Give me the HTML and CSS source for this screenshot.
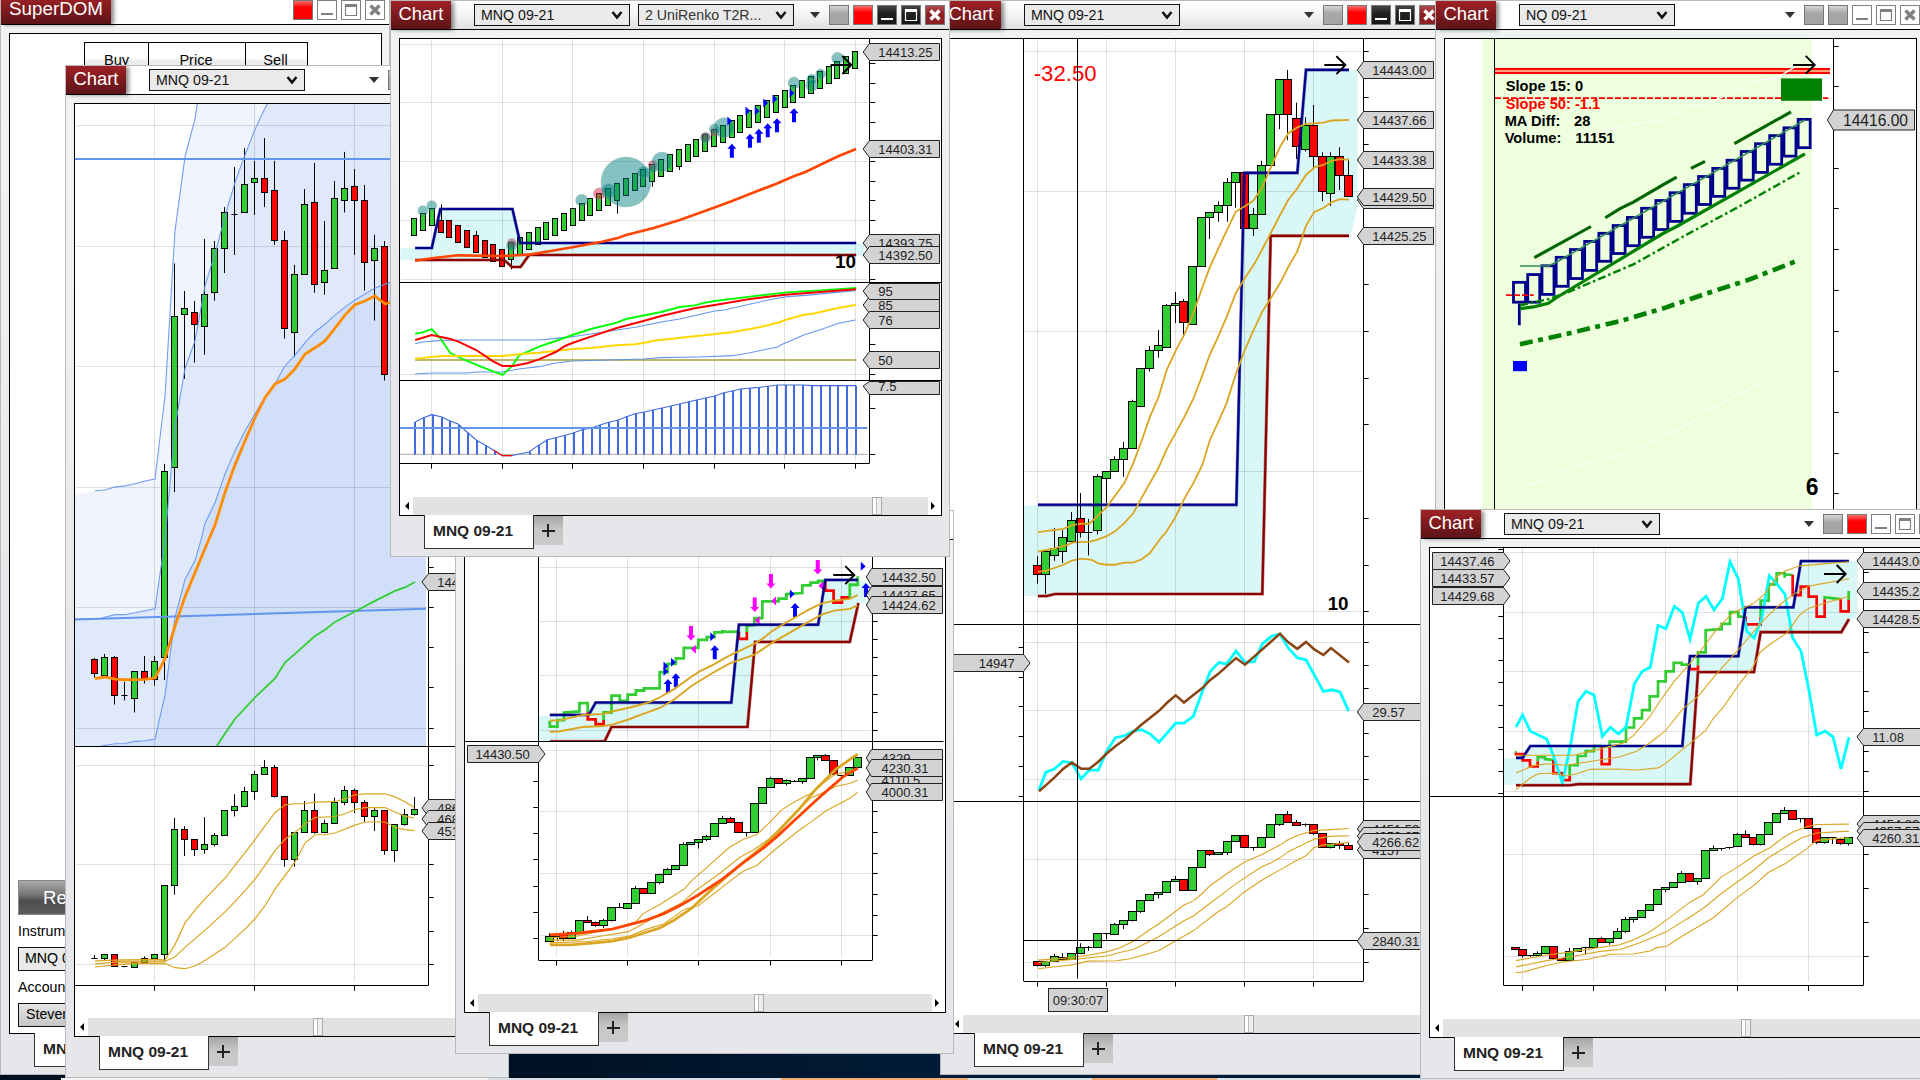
FILE: index.html
```html
<!DOCTYPE html>
<html lang="en">
<head>
<meta charset="utf-8">
<title>Trading workspace</title>
<link rel="stylesheet" href="styles.css">
</head>
<body>
<svg width="0" height="0" class="defs" aria-hidden="true">
  <symbol id="chev" viewBox="0 0 12 10"><path d="M1.5 2 6 7.5 10.500 2" fill="none" stroke="#111" stroke-width="2.600"/></symbol>
  <symbol id="min" viewBox="0 0 20 20"><path d="M4 14h12" stroke="currentColor" stroke-width="2"/></symbol>
  <symbol id="max" viewBox="0 0 20 20"><path d="M4.500 5.500h11v10h-11z" fill="none" stroke="currentColor" stroke-width="1.200"/><path d="M4 5.500h12" stroke="currentColor" stroke-width="3"/></symbol>
  <symbol id="close" viewBox="0 0 20 20"><path d="M5.500 5.500l9 9M14.500 5.500l-9 9" stroke="currentColor" stroke-width="3.400"/></symbol>
</svg>
<main class="desktop">
  <div class="taskbar"><i class="hot hot-a"></i><i class="hot hot-b"></i></div>

  <section class="window win-dom">
    <header class="titlebar"><span class="badge dom">SuperDOM</span>
      <span class="buttons"><i class="btn red"></i><i class="btn light"><svg><use href="#min"/></svg></i><i class="btn light"><svg><use href="#max"/></svg></i><i class="btn light"><svg><use href="#close"/></svg></i></span></header>
    <div class="body"><div class="frame dom-frame">
      <div class="ladder"><span>Buy</span><span>Price</span><span>Sell</span></div>
      <div class="order-form">
        <button class="reset">Reset</button>
        <label>Instrument</label><div class="field">MNQ 09-21</div>
        <label>Account</label><div class="field account">Steven</div>
      </div>
    </div></div>
    <footer class="tabs"><span class="tab">MNQ 09-21</span></footer>
  </section>

  <section class="window win-b">
    <header class="titlebar"><span class="badge">Chart</span><span class="select">MNQ 09-21<svg class="chev"><use href="#chev"/></svg></span>
      <span class="buttons"><i class="caret"></i><i class="btn grey"></i><i class="btn grey"></i><i class="btn light"></i><i class="btn light"></i><i class="btn light"></i></span></header>
    <div class="body"><div class="frame"><svg class="chart" id="chart-b"></svg>
      <div class="scroll"><i class="arrow left"></i><i class="track"><i class="thumb"></i></i><i class="arrow right"></i></div></div></div>
    <footer class="tabs"><span class="tab">MNQ 09-21</span><span class="add"></span></footer>
  </section>

  <section class="window win-e">
    <header class="titlebar active"><span class="badge">Chart</span><span class="select">MNQ 09-21<svg class="chev"><use href="#chev"/></svg></span>
      <span class="buttons"><i class="caret"></i><i class="btn grey"></i><i class="btn red"></i><i class="btn dark"><svg><use href="#min"/></svg></i><i class="btn dark"><svg><use href="#max"/></svg></i><i class="btn maroon"><svg><use href="#close"/></svg></i></span></header>
    <div class="body"><div class="frame"><svg class="chart" id="chart-e"></svg>
      <div class="scroll"><i class="arrow left"></i><i class="track"><i class="thumb"></i></i><i class="arrow right"></i></div></div></div>
    <footer class="tabs"><span class="tab">MNQ 09-21</span><span class="add"></span></footer>
  </section>

  <section class="window win-d">
    <header class="titlebar"><span class="badge">Chart</span></header>
    <div class="body"><div class="frame"><svg class="chart" id="chart-d"></svg>
      <div class="scroll"><i class="arrow left"></i><i class="track"><i class="thumb"></i></i><i class="arrow right"></i></div></div></div>
    <footer class="tabs"><span class="tab">MNQ 09-21</span><span class="add"></span></footer>
  </section>

  <section class="window win-c">
    <header class="titlebar active"><span class="badge">Chart</span><span class="select">MNQ 09-21<svg class="chev"><use href="#chev"/></svg></span><span class="select second">2 UniRenko T2R...<svg class="chev"><use href="#chev"/></svg></span>
      <span class="buttons"><i class="caret"></i><i class="btn grey"></i><i class="btn red"></i><i class="btn dark"><svg><use href="#min"/></svg></i><i class="btn dark"><svg><use href="#max"/></svg></i><i class="btn maroon"><svg><use href="#close"/></svg></i></span></header>
    <div class="body"><div class="frame"><svg class="chart" id="chart-c"></svg>
      <div class="scroll"><i class="arrow left"></i><i class="track"><i class="thumb"></i></i><i class="arrow right"></i></div></div></div>
    <footer class="tabs"><span class="tab">MNQ 09-21</span><span class="add"></span></footer>
  </section>

  <section class="window win-f">
    <header class="titlebar"><span class="badge">Chart</span><span class="select">NQ 09-21<svg class="chev"><use href="#chev"/></svg></span>
      <span class="buttons"><i class="caret"></i><i class="btn grey"></i><i class="btn grey"></i><i class="btn light"><svg><use href="#min"/></svg></i><i class="btn light"><svg><use href="#max"/></svg></i><i class="btn light"><svg><use href="#close"/></svg></i></span></header>
    <div class="body"><div class="frame"><svg class="chart" id="chart-f"></svg></div></div>
  </section>

  <section class="window win-g">
    <header class="titlebar"><span class="badge">Chart</span><span class="select">MNQ 09-21<svg class="chev"><use href="#chev"/></svg></span>
      <span class="buttons"><i class="caret"></i><i class="btn grey"></i><i class="btn red"></i><i class="btn light"><svg><use href="#min"/></svg></i><i class="btn light"><svg><use href="#max"/></svg></i><i class="btn light"><svg><use href="#close"/></svg></i></span></header>
    <div class="body"><div class="frame"><svg class="chart" id="chart-g"></svg>
      <div class="scroll"><i class="arrow left"></i><i class="track"><i class="thumb"></i></i><i class="arrow right"></i></div></div></div>
    <footer class="tabs"><span class="tab">MNQ 09-21</span><span class="add"></span></footer>
  </section>
</main>
<script src="charts.js"></script>
</body>
</html>
```
FILE: styles.css
```css
* { box-sizing: border-box; }
html, body { margin: 0; width: 1920px; height: 1080px; overflow: hidden; }
body { font-family: "Liberation Sans", Arial, sans-serif; color: #000; }
i { font-style: normal; display: block; }
.defs { position: absolute; }
.desktop { position: relative; width: 1920px; height: 1080px; overflow: hidden; background: linear-gradient(90deg, #00101f, #001226 30%, #011c38 50%, #001a35); }
.taskbar { position: absolute; left: 61px; right: 0; bottom: 0; height: 2px; background: linear-gradient(90deg, #f4f4f4 427px, #d8dfe8 428px, #dfe5ec); display: flex; }
.hot { background: #f6ad72; height: 2px; }
.hot-a { margin-left: 720px; width: 187px; }
.hot-b { margin-left: 124px; width: 125px; }

.window { position: absolute; display: flex; flex-direction: column; border: 1px solid #b9b9b9; background: linear-gradient(#f1f3f3, #f0f2f2 15%, #e5e6e9 60%, #e5e7ea); overflow: hidden; }
.win-dom { left: 0; top: -5px; width: 390px; height: 1080px; }
.win-b { left: 65px; top: 65px; width: 444px; height: 1013px; }
.win-c { left: 390px; top: 0; width: 560px; height: 557px; }
.win-d { left: 455px; top: 510px; width: 499px; height: 544px; }
.win-e { left: 940px; top: 0; width: 504px; height: 1075px; }
.win-f { left: 1435px; top: 0; width: 490px; height: 1075px; }
.win-g { left: 1420px; top: 509px; width: 524px; height: 570px; }

.titlebar { flex: none; display: flex; align-items: flex-start; height: 29px; border-bottom: 1px solid #000; background: #fff; }
.titlebar.active { background: linear-gradient(#fff, #f4f4f5 50%, #dfe0e2); }
.badge { flex: none; width: 60px; height: 28px; background: linear-gradient(#a02226, #7c1a1e 50%, #5c1418); color: #fff; font-size: 18.400px; line-height: 26px; text-align: center; box-shadow: 3px 1px 4px rgba(0,0,0,.45); }
.badge.dom { width: 110px; font-size: 18.800px; }
.select { flex: none; display: flex; align-items: center; justify-content: space-between; width: 156px; height: 22px; margin: 3px 0 0 23px; padding: 0 6px; border: 1px solid #111; background: #e9eae9; font-size: 14.200px; color: #111; }
.select.second { margin-left: 8px; color: #333; }
.chev { width: 12px; height: 10px; }
.buttons { margin-left: auto; display: flex; gap: 4px; padding: 4px 4px 0 0; align-items: center; }
.caret { width: 0; height: 0; margin-right: 5px; border: 5.500px solid transparent; border-top: 6px solid #333; border-bottom: 0; }
.btn { width: 20px; height: 20px; border: 1px solid #777; }
.btn svg { display: block; width: 20px; height: 20px; margin: -1px; }
.btn.grey { background: linear-gradient(#d6d6d6, #aaa7a9 40%, #a6a3a5); }
.btn.red { background: linear-gradient(#ff6e6e, #f00 35%); }
.btn.light { background: #fff; color: #808080; border-color: #808080; }
.btn.dark { background: linear-gradient(#444, #222 40%, #161616); color: #fff; }
.btn.maroon { background: linear-gradient(#b04a4e, #8c1f24 45%); color: #fff; }

.body { flex: 1; min-height: 0; padding: 8px 7px 0 8px; display: flex; }
.frame { flex: 1; min-width: 0; display: flex; flex-direction: column; border: 1px solid #000; background: #fff; }
.chart { flex: 1; min-height: 0; width: 100%; display: block; overflow: hidden; }
.scroll { flex: none; height: 18px; display: flex; background: #e2e2e2; }
.arrow { width: 13px; background: #fff; display: flex; align-items: center; justify-content: center; }
.arrow.right { justify-content: flex-start; padding-left: 3px; }
.arrow::before { content: ""; border: 4.500px solid transparent; }
.arrow.left::before { border-right: 4.500px solid #000; border-left: 0; }
.arrow.right::before { border-left: 4.500px solid #000; border-right: 0; }
.track { flex: 1; }
.thumb { width: 10px; height: 18px; border: 1px solid #aaa; background: linear-gradient(90deg, #fff 38%, #bbb 38%, #bbb 50%, #eee 50%); }
.win-b .thumb { margin-left: 225px; }
.win-c .thumb { margin-left: 459px; }
.win-d .thumb { margin-left: 276px; }
.win-e .thumb { margin-left: 281px; }
.win-g .thumb { margin-left: 298px; }

.tabs { flex: none; height: 40px; display: flex; align-items: flex-start; padding-left: 33px; }
.tab { position: relative; height: 34px; width: 110px; margin-top: -1px; background: #fff; border: 1px solid #333; border-top: 0; font: bold 15.500px/31px "Liberation Sans", Arial, sans-serif; color: #222; padding-left: 8px; white-space: nowrap; }
.add { width: 29px; height: 29px; background: linear-gradient(#a6a6a6, #c6c6c6 45%, #cbcbcb); display: flex; align-items: center; justify-content: center; }
.add::before { content: ""; width: 13px; height: 13px; margin-right: 1px; background: linear-gradient(#222, #222) center/13px 2px no-repeat, linear-gradient(#222, #222) center/2px 13px no-repeat; }

.dom-frame { justify-content: space-between; padding: 8px 8px 6px; }
.ladder { align-self: flex-start; margin-left: 66px; width: 224px; height: 40px; display: grid; grid-template-columns: 63px 97px 1fr; border: 1px solid #000; background: linear-gradient(#fff 15px, #eceded 18px); font-size: 14.600px; text-align: center; line-height: 34px; }
.ladder span + span { border-left: 1px solid #000; padding-right: 2px; }
.order-form { display: flex; flex-direction: column; align-items: flex-start; font-size: 14.200px; }
.reset { width: 118px; height: 35px; padding: 0 0 0 24px; text-align: left; border: 1px solid #888; background: linear-gradient(#a9a9a9, #777 40%, #4d4d4f 60%, #5c5c5e); color: #fff; font: 18.600px "Liberation Sans", Arial, sans-serif; }
.order-form label { line-height: 16px; margin: 8px 0; }
.field { width: 118px; height: 24px; padding-left: 6px; line-height: 21px; border: 1px solid #111; background: #e9eae9; }
.order-form .account { background: linear-gradient(#e4e4e4, #c6c6c6); padding-left: 7px; }

.tag { fill: #d3d3d3; stroke: #222; stroke-width: 1; }
.tag-text { font: 13px "Liberation Sans", Arial, sans-serif; fill: #222; }
.tag-text.big { font-size: 15.600px; }
.grid { stroke: #000; stroke-opacity: .12; stroke-width: 1; }
.axis { stroke: #000; stroke-width: 1; }
.corner { font: bold 18.800px "Liberation Sans", Arial, sans-serif; }
.corner.big { font-size: 23px; }
.pnl { font: 22.200px "Liberation Sans", Arial, sans-serif; fill: #f00; }
.note { font: bold 14.670px "Liberation Sans", Arial, sans-serif; }
.note.down { fill: #f00; }
```
FILE: charts.js
```js
// Colours shared by all charts.
const UP = '#32cd32', DOWN = '#ff0000', GOLD = '#daa520', NAVY = '#00008b', MAROON = '#8b0000', ZONE = '#d9f7f6';
const NS = 'http://www.w3.org/2000/svg';
const pairs = s => s.trim().split(/\s+/).map(p => p.split(',').map(Number));
const snap = v => Math.floor(v) + 0.5;

// A pen draws series given in chart units onto the workspace pixel grid.
function pen(id, ox, oy, sx, sy) {
  const svg = document.getElementById(id);
  const box = svg.getBoundingClientRect();
  svg.setAttribute('viewBox', `${box.left} ${box.top} ${box.width} ${box.height}`);
  svg.setAttribute('preserveAspectRatio', 'xMinYMin meet');
  const X = u => ox + u / sx, Y = v => oy + v / sy;
  const add = (tag, attrs, text) => {
    const e = document.createElementNS(NS, tag);
    for (const k in attrs) e.setAttribute(k, attrs[k]);
    if (text !== undefined) e.textContent = text;
    svg.appendChild(e);
    return e;
  };
  const pts = s => pairs(s).map(([a, b]) => X(a).toFixed(2) + ',' + Y(b).toFixed(2)).join(' ');
  const hl = (x1, x2, y, cls = 'axis') => add('line', { x1: X(x1), x2: X(x2), y1: snap(Y(y)), y2: snap(Y(y)), class: cls });
  const vl = (x, y1, y2, cls = 'axis') => add('line', { x1: snap(X(x)), x2: snap(X(x)), y1: Y(y1), y2: Y(y2), class: cls });
  const each = (s, f) => s.split(' ').map(Number).forEach(f);
  const P = {
    X, Y, add, hl, vl,
    line: (s, c, w = 1, extra = {}) => add('polyline', { points: pts(s), fill: 'none', stroke: c, 'stroke-width': w, 'stroke-linejoin': 'miter', ...extra }),
    fill: (s, c, extra = {}) => add('polygon', { points: pts(s), fill: c, ...extra }),
    rect: (x1, y1, x2, y2, c) => add('rect', { x: X(x1), y: Y(y1), width: X(x2) - X(x1), height: Y(y2) - Y(y1), fill: c }),
    gridV: (xs, y1, y2) => each(xs, x => vl(x, y1, y2, 'grid')),
    gridH: (ys, x1, x2) => each(ys, y => hl(x1, x2, y, 'grid')),
    ticksY: (ys, x) => each(ys, y => hl(x, x + 15, y)),
    ticksX: (xs, y) => each(xs, x => vl(x, y, y + 15)),
    zoneEdge: (s, c) => { P.line(s, c, 3.2, { opacity: .55 }); P.line(s, c, 2.1); },
    // rows: "x high top bottom low colour"; colour d marks an unchanged bar
    candles(rows, hw, hr = hw) {
      rows.trim().split(/[;\n]+/).forEach(r => {
        const [x, h, t, b, l, c] = r.trim().split(/\s+/);
        const cx = snap(X(+x)), top = snap(Y(+t)), bot = snap(Y(+b));
        add('path', { d: `M${cx} ${Y(+h)}V${Y(+l)}`, stroke: '#000' });
        if (c === 'd') add('path', { d: `M${cx - hw} ${top}H${cx + hr}`, stroke: '#000' });
        else add('rect', { x: cx - hw, y: top, width: hw + hr, height: Math.max(bot - top, 1), fill: c === 'g' ? UP : DOWN, stroke: '#000' });
      });
    },
    tag(y, text, tip, x1, x2, tx, o = {}) {
      const h = o.h || 9, cy = Math.round(Y(y) + .4), yt = cy - (o.up || h) + .5, yb = cy + (o.down || h) - .5;
      const a = X(tip), b = snap(X(x1)), c = snap(X(x2));
      add('path', { d: `M${a} ${cy}L${b} ${yt}H${c}V${yb}H${b}Z`, class: 'tag' });
      if (text) add('text', { x: X(tx), y: cy + (o.big ? 6 : 5.2), class: 'tag-text' + (o.big ? ' big' : '') }, text);
    },
    pointer(x1, x2, y) {
      const a = X(x1), b = X(x2), c = Y(y);
      add('path', { d: `M${a} ${c}H${b}M${b - 9} ${c - 9}L${b} ${c}L${b - 9} ${c + 9}`, fill: 'none', stroke: '#000', 'stroke-width': 2 });
    },
    arrowUp: (x, y) => add('path', { d: `M${X(x)} ${Y(y)}l4.500 5h-2.500v9h-4v-9h-2.500z`, fill: '#00f' }),
    arrowDown: (x, y) => add('path', { d: `M${X(x)} ${Y(y)}l4.500 -5h-2.500v-9.500h-4v9.500h-2.500z`, fill: '#f0f' }),
    flagRight: (x, y) => add('path', { d: `M${X(x)} ${Y(y) - 4.5}l4.800 4.500l-4.800 4.500z`, fill: '#00f' }),
    flagLeft: (x, y) => add('path', { d: `M${X(x)} ${Y(y) - 4.5}l-4.800 4.500l4.800 4.500z`, fill: '#f0f' }),
    text: (x, y, t, cls) => add('text', { x: X(x), y: Y(y), class: cls }, t),
    dots: (list, c) => list.forEach(([x, y, r]) => add('circle', { cx: X(x), cy: Y(y), r, fill: c, 'fill-opacity': .48, stroke: '#8aa', 'stroke-opacity': .5, 'stroke-width': .7 }))
  };
  return P;
}

/* ---- Window B: bands and candles ---- */
(() => {
  const p = pen('chart-b', 0, 0, 3, 2.904);
  const c1 = '285,1425 315,1423 345,1414 375,1411 405,1405 435,1397 465,1391 495,1150 525,670 555,455 585,345 592,300';
  const c2 = '225,1798 300,1796 345,1785 375,1785 465,1768 495,1568 525,1240 555,1070 585,990 615,830 650,720 680,610 705,530 733,455 763,380 793,318 803,300';
  const c3 = '300,2167 345,2160 375,2159 405,2153 435,2151 465,2146 495,2018 525,1793 555,1683 585,1628 603,1568 615,1520 645,1460 675,1376 703,1313 733,1255 763,1205 793,1155 825,1115 853,1065 885,1031 915,995 945,964 975,941 1005,915 1035,892 1065,871 1125,836 1170,820 1278,790';
  p.fill('225,1435 ' + c1 + ' 1278,300 1278,2167 225,2167', '#f0f4fd');
  p.fill(c2 + ' 1278,300 1278,2167 225,2167', '#e0e9fa');
  p.fill(c3 + ' 1278,2167', '#d1dff9');
  p.gridV('463 763 1063', 300, 2850);
  p.gridH('364 715 1064 1415 1764 2115 2222 2510 2800', 228, 1283);
  p.candles(`283 1911 1915 1955 1968 r;313 1899 1909 1962 1962 g;343 1905 1909 2019 2046 r;373 1980 2019 2019 2034 d;403 1949 1949 2028 2069 g;433 1905 1949 1973 1985 r;463 1905 1920 1973 1991 g;493 1347 1369 1909 1975 g;523 765 919 1357 1429 g;553 845 895 913 1100 g;583 874 907 942 1053 r;613 694 855 948 1030 g;643 700 721 849 873 g;673 601 617 721 793 g;703 485 622 622 740 d;733 430 535 617 617 g;763 467 518 529 624 g;793 401 518 559 601 r;823 467 553 698 711 r;853 671 698 953 983 r;883 769 797 965 1036 g;913 549 593 797 797 g;943 473 588 826 850 r;973 642 785 821 856 g;1003 526 576 779 779 g;1033 441 547 582 617 g;1063 491 541 582 740 r;1093 537 582 762 844 r;1123 682 721 756 931 g;1153 700 715 1087 1105 r`, 3);
  [c1, c2, c3].forEach(c => p.line(c, '#6495ed', 1.1, { opacity: .9 }));
  p.line('225,462 1278,462', '#6495ed', 2);
  p.line('225,1799 1278,1768', '#6495ed', 2);
  p.line('285,1971 315,1966 345,1972 375,1974 435,1973 465,1969 495,1913 525,1818 555,1733 585,1663 615,1593 645,1525 675,1430 705,1350 733,1285 765,1213 795,1155 825,1115 855,1101 885,1071 915,1028 945,1010 975,990 1035,915 1065,885 1095,874 1125,859 1155,883 1172,878', '#ff8c00', 2.8);
  p.line('650,2167 675,2130 705,2088 765,2025 825,1970 855,1924 885,1899 945,1847 975,1829 1005,1806 1065,1776 1125,1745 1185,1716 1215,1706 1245,1690', UP, 1.8);
  p.vl(1285, 300, 2862);
  const q = pen('chart-b', 0, 540, 3, 2.904);
  q.hl(225, 1500, 599); q.hl(225, 1285, 1293);
  q.ticksY('79 196 312 428 547 654 942 1038 1136 1232', 1286);
  q.ticksX('463 763 1063', 1294);
  q.candles(`283 1205 1216 1216 1217 d;313 1203 1203 1215 1220 g;343 1203 1203 1238 1238 r;373 1238 1239 1239 1241 d;403 1227 1227 1241 1241 g;433 1209 1215 1226 1226 g;463 1203 1203 1215 1221 g;493 1003 1003 1203 1225 g;523 807 840 1003 1030 g;553 831 840 869 918 r;583 869 869 898 918 r;613 805 884 898 911 g;643 851 857 884 890 g;673 785 785 857 857 g;703 738 773 785 803 g;733 717 730 773 773 g;763 671 680 730 754 g;793 639 660 681 681 g;823 653 660 744 748 r;853 744 744 927 949 r;883 849 849 927 949 g;913 758 785 849 849 g;943 736 785 849 853 r;973 812 823 849 849 g;1003 748 762 823 823 g;1033 714 727 762 770 g;1063 722 727 762 793 r;1093 755 762 802 819 r;1123 778 785 802 845 g;1153 785 785 901 914 r;1183 826 826 901 935 g;1213 781 797 826 829 g;1243 746 782 797 800 g`, 3);
  q.line('345,1224 495,1224', GOLD, 4, { opacity: .45 });
  q.line('285,1222 345,1220 465,1218 495,1220 525,1175 555,1112 585,1075 615,1042 675,982 735,908 765,870 795,830 825,792 855,769 885,766 915,766 945,761 1005,760 1035,752 1065,740 1095,737 1155,737 1185,746 1215,760 1243,777', GOLD, 1.2);
  q.line('285,1231 345,1226 495,1224 525,1210 555,1183 615,1133 675,1080 705,1050 735,1018 765,985 795,945 825,902 855,869 885,849 915,825 945,806 1005,803 1035,795 1065,783 1095,777 1155,777 1185,790 1215,802 1243,808', GOLD, 1.2);
  q.line('285,1240 345,1234 405,1230 495,1230 525,1242 555,1245 585,1237 615,1221 675,1183 735,1130 765,1100 795,1062 825,1014 885,935 915,880 945,856 975,856 1005,851 1065,828 1095,819 1155,819 1185,835 1215,841 1243,844', GOLD, 1.2);
  [[120, '14432.50'], [776, '4862.31'], [809, '4683.5'], [843, '4512.12']].forEach(([y, t]) => q.tag(y, t, 1266, 1284, 1480, 1312));
})();

/* ---- Window C: renko, oscillator, histogram ---- */
(() => {
  const p = pen('chart-c', 380, 0, 2.703, 3);
  const q = pen('chart-c', 380, 270, 2.703, 3);
  p.fill('55,745 140,745 163,627 358,627 379,730 1310,730 1310,767 403,767 380,801 355,801 335,780 55,780', ZONE);
  p.gridV('139 331 520 712 904 1093 1285', 118, 1380);
  p.gridH('133 307 484 661 838 1123', 57, 1318);
  const X0 = 93.5, STEP = 23.84;
  const tops = [656, 640, 625, 661, 661, 676, 691, 706, 721, 733, 748, 727, 712, 697, 682, 667, 655, 640, 625, 610, 595, 580, 565, 550, 535, 520, 508, 493, 478, 463, 448, 433, 418, 403, 388, 376, 361, 346, 331, 316, 301, 286, 271, 256, 241, 229, 214, 199, 184, 169, 154];
  const high = { 3: 613, 7: 693 }, low = { 11: 808, 23: 641, 27: 560, 30: 510, 10: 799 };
  p.candles(tops.map((t, i) => `${X0 + i * STEP} ${high[i] || t} ${t} ${t + (i === 3 ? 36 : 51)} ${low[i] || t + 36} ${i > 2 && i < 11 ? 'r' : 'g'}`).join(';'), 3, 2);
  p.zoneEdge('95,780 335,780 357,801 380,801 403,765 1287,765', MAROON);
  p.zoneEdge('95,744 140,744 163,627 358,627 379,729 1287,729', NAVY);
  p.line('95,782 140,775 210,766 330,768 400,764 450,755 520,742 600,725 645,713 665,705 740,684 810,660 880,632 950,604 1020,573 1070,552 1120,528 1150,516 1200,489 1240,468 1287,447', '#ff4500', 2.6);
  p.dots([[593, 581, 6], [737, 495, 4.5], [880, 410, 4.5], [904, 397, 4], [356, 729, 4.5]], '#dc143c');
  p.dots([[116, 632, 5], [140, 617, 5], [356, 737, 5], [545, 601, 6], [618, 573, 7], [665, 546, 25], [713, 517, 6], [737, 507, 4], [762, 486, 10], [880, 414, 5], [904, 387, 5], [930, 383, 10], [1119, 249, 6], [1167, 238, 5], [1167, 256, 6], [1191, 222, 5], [1237, 175, 6]], '#008080');
  [[951, 431], [1000, 401], [1024, 386], [1048, 370], [1073, 355], [1119, 325]].forEach(a => p.arrowUp(...a));
  [[939, 363], [988, 333], [1013, 333], [1036, 309], [1061, 297], [1107, 279]].forEach(a => p.flagRight(...a));
  p.pointer(1218, 1274, 195);
  p.text(1230, 803, '10', 'corner');
  p.vl(1323, 117, 1390); p.hl(54, 1520, 848); q.hl(54, 1520, 331); q.hl(54, 1323, 580);
  p.ticksY('190 250 307 367 484 544 601 661 838', 1324);
  q.ticksY('223 313 415 553', 1324);
  q.ticksX('139 331 520 712 904 1093 1285', 581);
  q.line('95,270 1287,270', '#bdb76b', 2);
  q.line('95,221 115,216 165,211 235,210 430,210 475,205 520,200 600,187 690,172 760,156 810,147 905,123 930,120 1050,90 1100,80 1150,76 1285,62', '#6495ed', 1.1);
  q.line('95,312 140,309 235,309 260,306 331,306 380,296 430,290 475,279 520,273 712,267 760,263 860,261 955,257 1000,248 1075,231 1090,221 1115,210 1145,195 1190,179 1240,160 1285,150', '#6495ed', 1.1);
  q.line('95,191 115,187 140,177 163,205 190,249 235,273 285,295 331,315 357,288 377,255 400,245 430,230 475,213 520,195 570,177 640,158 665,147 760,126 810,111 850,106 880,98 905,93 1000,80 1095,68 1140,64 1190,61 1287,54', '#00ff00', 1.9);
  q.line('95,266 165,258 331,258 380,252 430,248 520,237 570,234 640,226 690,223 712,219 740,212 800,205 950,187 1000,177 1040,168 1075,158 1095,150 1145,134 1170,131 1240,113 1287,105', '#ffd700', 2);
  q.line('95,210 140,195 190,207 212,215 260,240 307,275 331,288 360,288 400,279 430,268 475,246 500,228 520,219 570,200 640,174 712,153 760,138 850,115 905,105 1000,87 1095,74 1190,66 1287,58', '#ff0000', 2);
  const hist = '95,456 116,444 140,434 165,440 190,453 212,463 235,486 260,510 284,525 307,541 331,557 355,557 380,551 403,546 427,527 452,509 476,503 500,496 520,490 546,479 571,474 595,465 618,457 642,451 666,440 690,431 715,426 738,420 787,408 832,396 880,384 905,378 930,368 975,357 1025,352 1075,345 1143,345 1168,347 1287,347';
  const hp = pairs(hist);
  const at = x => { const k = Math.max(1, hp.findIndex(a => a[0] >= x)); const [a, b] = hp[k - 1], [c, d] = hp[k]; return b + (d - b) * (x - a) / (c - a); };
  q.line('54,553 1318,553', '#aaa', 1);
  for (let i = 0; i < 51; i++) {
    const x = 95 + i * STEP;
    if (i < 10 || i > 12) q.add('rect', { x: Math.round(q.X(x)) - 1, y: q.Y(at(Math.min(x, 1286))), width: 2, height: q.Y(554) - q.Y(at(Math.min(x, 1286))), fill: '#4169e1' });
  }
  q.line(hist, '#4169e1', 1.1);
  q.line('307,541 331,557 357,557', '#f00', 1.2);
  q.line('54,474 1317,474', '#6495ed', 2);
  const T = [1306, 1323, 1513, 1347];
  p.tag(155, '14413.25', ...T); p.tag(445, '14403.31', ...T); p.tag(727, '14393.75', ...T); p.tag(764, '14392.50', ...T);
  q.tag(105, '85', ...T); q.tag(62, '95', ...T, { up: 8 }); q.tag(148, '76', ...T); q.tag(268, '50', ...T); q.tag(346, '7.5', ...T, { up: 5 });
})();

/* ---- Window D: step line with signals ---- */
(() => {
  const p = pen('chart-d', 440, 540, 2.904, 2.904);
  p.fill('287,511 432,511 452,472 846,472 868,246 1098,246 1119,118 1237,118 1237,183 1215,183 1190,296 915,296 893,543 498,543 480,584 287,584', ZONE);
  p.gridV('338 544 750 959 1165', 0, 1210);
  p.gridH('79 236 393 553 611 788 968 1148', 290, 1252);
  [['319,525 319,542 341,542 341,523 360,523 360,501 405,498 405,474 429,474 429,500', UP], ['429,500 429,521 452,521 452,535 475,535 475,523', DOWN],
   ['475,523 475,501 498,501 498,452 522,452 522,467 545,467 545,449 569,449 569,437 592,437 592,431 638,431 638,384 661,384 661,360 685,360 685,344 708,344 708,313 750,313 750,290 775,290 775,282 797,282 797,268 820,268 820,265 830,267 868,266', UP],
   ['868,266 868,287 891,287 891,267', DOWN], ['891,267 891,249 913,247 913,227 936,227 936,178 983,178 983,170 1006,170 1006,157 1052,154 1052,132 1076,132 1076,124 1098,124 1098,119 1119,119', UP],
   ['1119,119 1119,147 1143,147 1143,182 1167,182 1167,167 1190,167', DOWN], ['1190,167 1190,130 1213,130 1213,105', UP]].forEach(([s, c]) => p.line(s, c, 2.8));
  [[649, 366], [649, 382], [671, 355], [785, 281], [1016, 157], [1222, 76]].forEach(a => p.flagRight(...a));
  [[743, 317], [928, 234], [976, 177], [1113, 133]].forEach(a => p.flagLeft(...a));
  p.zoneEdge('319,585 478,585 498,543 893,543 915,296 1190,296 1215,183', MAROON);
  p.zoneEdge('319,508 432,508 452,472 846,472 868,246 1098,246 1119,116 1213,116', NAVY);
  [[662, 404], [685, 387], [798, 306], [1031, 183], [1237, 125]].forEach(a => p.arrowUp(...a));
  [[729, 292], [914, 209], [961, 141], [1097, 100]].forEach(a => p.arrowDown(...a));
  p.line('319,525 350,523 415,508 475,505 500,498 570,482 610,470 640,456 680,433 730,397 755,381 790,364 840,336 870,322 915,300 935,288 965,264 1000,243 1040,220 1075,200 1110,184 1145,176 1190,171 1213,160', GOLD, 1.9);
  p.line('319,557 345,556 415,543 475,540 500,536 545,522 590,505 640,487 680,463 730,424 790,387 840,359 870,348 915,332 965,298 1020,267 1075,235 1110,216 1145,205 1190,200 1213,190', GOLD, 1.9);
  p.pointer(1142, 1203, 102);
  p.rect(73, 586, 1461, 592, '#fff');
  p.vl(286, 0, 1220); p.vl(1255, 0, 1221); p.hl(73, 1462, 585); p.hl(286, 1255, 1220);
  p.ticksY('236 288 341 393 448 500 553 788 849 910 968 1029 1090 1148', 1256);
  p.ticksY('701 776 852 927 1006 1081 1157', 271);
  p.ticksX('338 544 750 959 1165', 1221);
  p.candles(`318 1142 1150 1165 1165 g;341 1150 1150 1150 1165 d;359 1135 1147 1158 1165 r;382 1135 1140 1158 1158 g;405 1105 1105 1140 1140 g;428 1092 1104 1110 1110 r;452 1108 1110 1119 1123 r;474 1100 1104 1119 1127 g;497 1067 1067 1104 1108 g;521 1054 1067 1067 1068 d;544 1055 1055 1070 1070 g;568 1005 1011 1055 1055 g;591 1011 1011 1026 1026 r;614 994 994 1026 1026 g;637 971 971 994 1000 g;660 952 956 971 971 g;684 945 945 956 956 g;707 878 884 945 945 g;728 878 878 884 884 g;750 870 870 878 896 g;774 856 860 870 874 g;797 823 823 860 860 g;820 801 808 823 823 g;844 804 808 820 820 r;867 820 820 849 849 r;890 849 849 849 861 d;912 765 765 849 849 g;936 718 718 765 765 g;960 688 692 718 718 g;983 692 692 707 707 r;1006 695 699 708 713 g;1029 697 700 700 703 d;1052 692 692 700 708 g;1075 631 631 692 692 g;1097 626 626 631 640 g;1119 622 626 640 640 r;1143 640 640 682 682 r;1165 682 685 685 690 d;1189 660 660 685 685 g;1212 631 631 660 660 g`, 4);
  p.line('319,1155 400,1150 450,1140 520,1125 570,1108 590,1085 640,1058 710,1013 730,990 770,955 840,893 880,870 920,855 960,818 990,785 1030,760 1075,737 1115,705 1145,682 1190,670 1213,663', GOLD, 1.1);
  p.line('319,1162 400,1162 470,1150 545,1138 580,1120 640,1085 700,1055 740,1020 810,970 870,922 910,900 960,865 1020,805 1075,750 1110,735 1150,715 1190,707 1213,697', GOLD, 1.1);
  p.line('319,1170 430,1166 500,1158 550,1150 600,1130 650,1115 710,1072 750,1062 830,1000 880,962 920,945 980,893 1040,845 1080,817 1120,787 1190,750 1213,733', GOLD, 1.1);
  p.line('319,1176 380,1176 450,1170 500,1165 550,1155 590,1142 640,1126 680,1104 730,1070 800,1005 870,945 935,892 980,848 1040,785 1090,725 1150,665 1213,622', GOLD, 2.8);
  p.line('319,1147 400,1142 500,1130 550,1117 600,1104 650,1085 700,1060 750,1031 820,985 890,930 940,894 980,860 1050,795 1110,740 1170,688 1213,663', '#ff4500', 2.8);
  const T = [1238, 1254, 1460, 1282];
  [[158, '14427.65'], [106, '14432.50'], [187, '14424.62'], [697, '4110.5'], [631, '4329'], [661, '4230.31'], [731, '4000.31']].forEach(([y, t]) => p.tag(y, t, ...T));
  p.tag(620, '14430.50', 305, 287, 79, 103);
})();

/* ---- Window E: trend chart with crosshair ---- */
(() => {
  const p = pen('chart-e', 930, 0, 3, 2.904);
  const q = pen('chart-e', 930, 540, 3, 2.904);
  p.fill('281,1468 918,1468 943,502 1102,502 1128,205 1283,205 1283,600 1262,684 1022,686 997,1725 375,1725 345,1731 281,1731', ZONE);
  p.gridV('322 529 736 943 1150', 112, 2842);
  p.gridH('149 556 962 1369 1775', 285, 1296);
  q.gridH('297 495 695 927 1226', 285, 1296);
  p.candles(`322 1615 1641 1668 1695 r;347 1602 1602 1668 1725 g;373 1533 1593 1612 1629 g;397 1540 1560 1602 1635 g;424 1487 1511 1572 1572 g;451 1432 1505 1546 1561 r;475 1507 1546 1546 1613 d;502 1377 1383 1540 1552 g;529 1369 1369 1389 1461 g;553 1325 1334 1369 1369 g;580 1283 1302 1334 1385 g;607 1161 1165 1302 1302 g;631 1070 1070 1180 1180 g;658 1005 1018 1070 1079 g;685 958 1003 1018 1039 g;709 883 887 1008 1008 g;736 848 881 887 938 g;760 868 875 936 975 r;787 773 773 942 942 g;814 631 631 773 773 g;839 617 617 631 694 g;865 585 597 617 644 g;892 517 529 597 644 g;916 500 500 529 603 g;943 500 500 663 663 r;970 604 622 663 685 g;994 467 480 622 622 g;1021 332 332 480 480 g;1048 230 230 332 375 g;1072 203 230 332 407 r;1099 298 344 426 462 r;1126 341 364 434 440 g;1150 305 364 454 491 r;1177 442 454 556 584 r;1201 442 454 562 598 g;1228 428 454 509 552 r;1255 461 509 570 570 r`, 4);
  p.zoneEdge('324,1731 350,1731 375,1725 997,1725 1022,685 1257,685', MAROON);
  p.zoneEdge('324,1466 919,1466 943,502 1102,502 1128,203 1257,203', NAVY);
  p.line('324,1545 400,1536 425,1526 450,1521 478,1521 530,1473 583,1403 610,1345 635,1280 660,1210 685,1155 710,1075 737,1018 762,973 790,910 815,840 840,775 865,722 890,670 917,615 943,600 970,583 995,547 1025,480 1050,427 1075,387 1102,370 1128,360 1180,356 1205,350 1257,348', GOLD, 1.8);
  p.line('324,1602 370,1593 410,1583 430,1575 480,1573 500,1568 530,1557 555,1543 583,1519 610,1490 635,1445 685,1360 710,1305 762,1213 790,1158 815,1095 840,1028 865,977 890,920 918,850 943,810 975,763 1000,718 1050,625 1075,580 1102,547 1128,508 1155,485 1180,479 1205,467 1230,462 1257,464', GOLD, 1.8);
  p.line('324,1661 350,1657 400,1640 425,1628 455,1622 485,1626 505,1636 530,1640 555,1640 583,1634 610,1634 635,1624 660,1606 688,1568 710,1543 735,1504 762,1450 790,1403 817,1350 840,1277 865,1225 890,1170 918,1085 943,1020 970,960 997,905 1025,862 1050,822 1075,775 1102,730 1128,656 1152,616 1180,604 1205,587 1230,578 1257,580', GOLD, 1.8);
  p.pointer(1183, 1246, 189);
  p.text(311, 235, '-32.50', 'pnl');
  q.text(1193, 203, '10', 'corner');
  q.line('327,727 347,675 373,665 399,643 426,647 453,694 478,668 505,668 530,613 556,574 582,569 610,555 635,551 660,563 687,587 737,532 762,532 790,512 817,440 840,383 866,356 890,360 918,322 945,355 973,353 997,302 1025,279 1050,273 1075,314 1102,342 1128,348 1180,440 1205,435 1230,441 1256,497', '#00ffff', 2.8);
  q.line('327,730 373,690 399,665 426,646 453,664 478,664 505,644 530,620 556,599 582,581 635,536 687,496 712,472 737,451 762,472 790,450 817,430 840,407 866,388 918,343 945,362 973,338 1050,272 1075,297 1102,316 1128,296 1152,317 1180,334 1203,314 1257,356', '#8b4513', 2.5);
  q.candles(`322 1223 1223 1235 1239 r;347 1223 1223 1235 1240 g;373 1202 1209 1223 1223 g;397 1200 1211 1219 1219 r;424 1200 1200 1217 1217 g;451 1171 1183 1200 1200 g;475 1179 1183 1183 1193 d;502 1142 1142 1183 1183 g;529 1142 1144 1144 1160 d;553 1112 1116 1145 1145 g;580 1104 1104 1116 1130 g;607 1078 1078 1104 1108 g;631 1046 1046 1078 1083 g;658 1029 1029 1046 1046 g;685 1023 1023 1029 1041 g;709 991 991 1023 1023 g;736 976 985 991 991 g;760 985 985 1017 1017 r;787 951 951 1017 1017 g;814 901 901 951 951 g;839 901 901 913 918 r;865 907 907 913 913 g;892 876 876 907 915 g;916 858 858 876 876 g;943 858 858 892 892 r;970 892 892 892 902 d;994 863 863 892 892 g;1021 826 826 863 863 g;1048 797 797 826 830 g;1072 787 797 821 821 r;1099 813 821 828 828 r;1126 823 826 826 832 d;1150 826 826 852 856 r;1177 852 852 892 892 r;1201 881 881 892 896 g;1228 874 881 886 897 r;1255 880 887 898 898 r`, 4);
  q.line('324,1220 400,1215 480,1205 530,1196 570,1184 610,1165 660,1131 685,1116 737,1078 762,1060 790,1048 815,1028 840,1004 890,969 918,951 943,936 995,913 1050,886 1075,870 1102,858 1150,844 1205,841 1257,838', GOLD, 1.1);
  q.line('324,1227 430,1218 530,1208 582,1195 610,1189 685,1153 762,1106 790,1092 840,1055 890,1019 918,998 995,949 1020,939 1050,923 1075,905 1128,880 1155,868 1205,860 1257,859', GOLD, 1.1);
  q.line('324,1245 430,1233 475,1223 560,1222 600,1216 660,1200 687,1192 737,1164 790,1135 865,1079 890,1065 943,1022 1000,985 1050,958 1102,929 1128,917 1152,893 1180,886 1257,878', GOLD, 1.1);
  p.vl(281, 111, 2849); p.vl(1300, 111, 2850); p.vl(442, 111, 2842);
  q.hl(0, 1540, 245); q.hl(0, 1540, 759); q.hl(281, 1300, 1281); q.hl(281, 1283, 1162);
  p.ticksY('149 283 419 826 962 1099 1232 1505 1642 1775', 1301);
  q.ticksY('297 364 431 561 628 695 1029 1128 1226', 1301);
  q.ticksY('312 399 483 570 657 744', 266);
  q.ticksX('322 529 736 943 1150', 1282);
  const T = [1282, 1299, 1511, 1327];
  p.tag(579, '', ...T);
  [[201, '14443.00'], [347, '14437.66'], [463, '14433.38'], [571, '14429.50'], [684, '14425.25']].forEach(([y, t]) => p.tag(y, t, ...T));
  [[497, '29.57'], [837, '4451.58'], [858, '4359.67'], [898, '4157'], [875, '4266.62'], [1162, '2840.31']].forEach(([y, t]) => q.tag(y, t, ...T));
  q.tag(355, '14947', 300, 281, 20, 146);
  q.add('rect', { x: snap(q.X(356)), y: snap(q.Y(1303)), width: 59, height: 23, class: 'tag' });
  q.text(368, 1351, '09:30:07', 'tag-text');
})();

/* ---- Window F: NQ trend ---- */
(() => {
  const p = pen('chart-f', 1420, 0, 3, 2.958);
  p.rect(186, 114, 1176, 2000, '#edffdc');
  p.rect(225, 201, 1230, 219, '#f00'); p.rect(225, 207, 1230, 213, '#ffa07a');
  p.line('225,290 1225,290', '#f00', 1.8, { 'stroke-dasharray': '6 2' });
  p.line('440,405 530,393 640,367 725,355 810,315 855,308 900,290 985,252 1030,236 1070,231 1125,198', '#fafff6', 1.4);
  p.line('302,1438 385,1420 430,1395 475,1375 640,1338 725,1290 780,1267 820,1247 857,1215 897,1198 940,1173 1028,1132 1070,1094 1115,1068 1155,1034', '#fafff6', 1.4);
  p.rect(1083, 232, 1206, 298, '#008000');
  p.text(257, 270, 'Slope 15: 0', 'note'); p.text(257, 323, 'Slope 50: -1.1', 'note down');
  p.text(254, 373, 'MA Diff:', 'note'); p.text(462, 373, '28', 'note');
  p.text(254, 422, 'Volume:', 'note'); p.text(466, 422, '11151', 'note');
  const tops = [831, 808, 782, 757, 734, 710, 686, 663, 639, 612, 589, 566, 542, 518, 494, 470, 444, 421, 397, 374, 349];
  const bots = [898, 898, 875, 851, 828, 804, 777, 754, 731, 706, 683, 659, 635, 609, 585, 561, 537, 514, 490, 466, 441];
  tops.forEach((t, i) => p.add('rect', { x: p.X(298.5 + i * 42.7) - 6, y: p.Y(t) + 1.4, width: 12, height: p.Y(bots[i]) - p.Y(t) - 2.8, fill: 'none', stroke: NAVY, 'stroke-width': 2.8 }));
  p.line('298,898 298,962', NAVY, 2.8);
  p.line('300,787 385,787 410,775 1155,355', '#2e8b57', 1.6);
  ['343,762 513,670', '556,644 600,617 640,598 730,546 770,524', '813,498 855,477', '943,425 1113,331'].forEach(s => p.line(s, '#006400', 3.1));
  p.line('300,903 385,885 450,862 640,782 800,694 950,615 1145,507', '#008000', 2.4, { 'stroke-dasharray': '8 3 2.500 3' });
  p.line('300,913 340,908 385,897 410,880 730,690 770,670 1155,455', '#008000', 3.2);
  p.line('300,1018 430,990 515,970 600,950 730,912 860,868 985,828 1140,768', '#008000', 4.6, { 'stroke-dasharray': '13 5.500 5 5.800' });
  p.line('258,873 341,873', '#f00', 1.6, { 'stroke-dasharray': '6 2' });
  p.rect(279, 1068, 321, 1098, '#00f');
  p.pointer(1119, 1184, 192);
  p.text(1157, 1463, '6', 'corner big');
  p.vl(223, 114, 2000); p.vl(1240, 114, 2000);
  p.ticksY('137 255 498 616 738 859 980 1099 1220 1341 1460', 1241);
  p.tag(353, '14416.00', 1222, 1239, 1484, 1269, { h: 10.5, big: true });
})();

/* ---- Window G: step line with momentum ---- */
(() => {
  const p = pen('chart-g', 1420, 500, 3, 2.703);
  p.fill('252,698 308,698 331,665 787,665 808,422 955,422 976,290 1120,290 1142,165 1313,165 1313,322 1288,322 1264,356 1022,356 1002,465 833,465 811,768 252,770', ZONE);
  p.gridV('307 520 736 952 1165', 130, 1303);
  p.gridH('142 304 463 625 788 958 1234', 254, 1327);
  const thin = ['288,690 460,690 545,672 610,657 640,637 690,585 715,550 760,493 805,447 850,398 885,355 935,308 960,296 1000,280 1035,253 1070,208 1095,192 1140,178 1195,174 1287,167',
    '288,738 340,718 380,713 440,717 500,708 600,694 650,679 690,656 735,625 790,563 835,530 885,475 960,400 1020,335 1070,290 1120,255 1165,233 1220,224 1287,213',
    '288,783 330,752 355,740 400,738 440,746 470,740 510,728 590,727 650,730 715,724 740,710 810,658 858,622 880,590 910,560 960,495 1000,450 1020,412 1050,390 1100,360 1140,310 1165,293 1210,280 1287,261'];
  [['284,682 290,682', UP], ['284,687 308,687 308,704 330,704 330,720 353,720 353,706', DOWN], ['353,706 353,695 375,695 375,700 400,703', UP], ['400,703 400,738 425,738 425,757 449,757 449,745', DOWN],
   ['449,745 449,717 473,717 473,692 497,692 497,679 522,679 522,665 545,665', UP], ['545,665 545,714 569,714 569,670', DOWN],
   ['569,670 569,653 618,653 618,615 642,615 642,590 666,590 666,568 689,568 689,531 714,531 714,490 737,490 737,463 761,463 761,440 785,440 785,445 809,445', UP], ['809,445 809,457 834,457 834,447', DOWN],
   ['834,447 834,412 857,412 857,352 905,349 905,335 930,335 930,303 955,303 955,315 977,315', UP], ['977,315 977,336 1022,336 1022,315', DOWN],
   ['1022,315 1022,272 1046,272 1046,228 1070,228 1070,198 1094,198 1094,210 1094,202 1118,202', UP], ['1118,202 1118,257 1142,257 1142,234 1166,234 1166,261 1190,261 1190,315 1214,315 1214,268', DOWN],
   ['1214,268 1214,263 1262,268', UP], ['1262,268 1262,301 1286,301 1286,268', DOWN], ['1286,270 1286,246', UP]].forEach(([s, c]) => p.line(s, c, 2.7));
  p.line('288,614 308,581 331,625 380,646 400,690 427,765 450,670 474,545 498,517 522,527 547,639 571,614 595,632 618,614 643,497 667,463 691,452 714,339 738,348 763,287 787,304 810,376 835,279 858,260 882,297 907,267 930,167 955,213 980,355 1002,373 1024,325 1048,205 1072,228 1095,255 1118,373 1143,408 1167,515 1190,635 1215,625 1239,640 1263,727 1287,641', '#00ffff', 2.8);
  p.zoneEdge('288,771 450,771 475,768 811,768 834,465 1002,465 1022,357 1264,357 1287,322', MAROON);
  p.zoneEdge('288,697 308,697 331,665 787,665 810,422 955,422 977,290 1120,290 1143,165 1287,165', NAVY);
  thin.forEach(s => p.line(s, GOLD, 1.1));
  p.pointer(1212, 1277, 200);
  p.candles(`286 1209 1209 1215 1217 r;308 1215 1215 1231 1237 r;331 1231 1231 1231 1235 d;352 1220 1226 1231 1231 g;376 1207 1207 1226 1226 g;400 1207 1207 1240 1243 r;425 1240 1240 1245 1245 r;449 1211 1220 1245 1245 g;473 1212 1212 1220 1220 g;496 1210 1210 1210 1228 d;520 1185 1185 1210 1210 g;545 1181 1185 1196 1196 r;569 1185 1185 1196 1202 g;592 1157 1165 1185 1185 g;617 1127 1133 1165 1170 g;641 1128 1128 1134 1142 g;664 1109 1109 1128 1128 g;688 1093 1093 1109 1109 g;712 1052 1052 1093 1093 g;736 1047 1047 1052 1060 g;760 1033 1033 1047 1047 g;785 1003 1009 1033 1033 g;808 1009 1009 1031 1031 r;833 1023 1023 1031 1040 g;857 947 947 1023 1023 g;880 934 941 947 947 g;904 941 941 941 948 d;928 938 938 938 944 d;952 900 904 936 936 g;976 893 904 912 912 r;999 912 912 931 934 r;1021 904 904 931 934 g;1046 872 872 904 904 g;1069 847 847 872 872 g;1094 830 839 847 847 g;1118 839 839 863 863 r;1142 862 862 862 872 d;1165 861 861 887 887 r;1189 887 887 926 930 r;1213 912 912 926 929 g;1237 911 913 913 930 d;1261 913 917 928 932 r;1285 912 912 928 934 g`, 4);
  p.line('288,1245 380,1230 450,1222 520,1212 600,1202 640,1189 690,1167 737,1137 810,1087 850,1067 905,1018 955,991 1000,963 1050,940 1090,912 1120,897 1160,883 1190,877 1287,876', GOLD, 1.1);
  p.line('288,1262 380,1245 470,1232 540,1220 600,1215 660,1197 737,1168 810,1127 858,1098 905,1063 1002,1000 1045,967 1095,940 1145,913 1190,900 1287,895', GOLD, 1.1);
  p.line('288,1278 310,1276 380,1258 430,1248 500,1242 570,1228 640,1227 690,1219 710,1210 740,1206 790,1177 880,1129 955,1072 1000,1043 1045,1007 1095,983 1160,943 1190,920 1287,913', GOLD, 1.1);
  p.vl(250, 128, 1311); p.vl(1330, 128, 1312); p.hl(30, 1600, 801); p.hl(250, 1330, 1311);
  p.ticksY('134 315 374 433 493 555 614 674 734 793', 235);
  p.ticksY('196 358 412 517 571 680 734 788 958 1050 1142 1234', 1331);
  p.ticksX('307 520 736 952 1165', 1312);
  const R = [1311, 1329, 1541, 1357], L = [270, 251, 38, 61];
  [[163, '14443.00'], [246, '14435.25'], [320, '14428.50'], [639, '11.08'], [875, '4454.83'], [894, '4357.57'], [912, '4260.31']].forEach(([y, t]) => p.tag(y, t, ...R));
  [[163, '14437.46'], [211, '14433.57'], [258, '14429.68']].forEach(([y, t]) => p.tag(y, t, ...L));
})();
```
